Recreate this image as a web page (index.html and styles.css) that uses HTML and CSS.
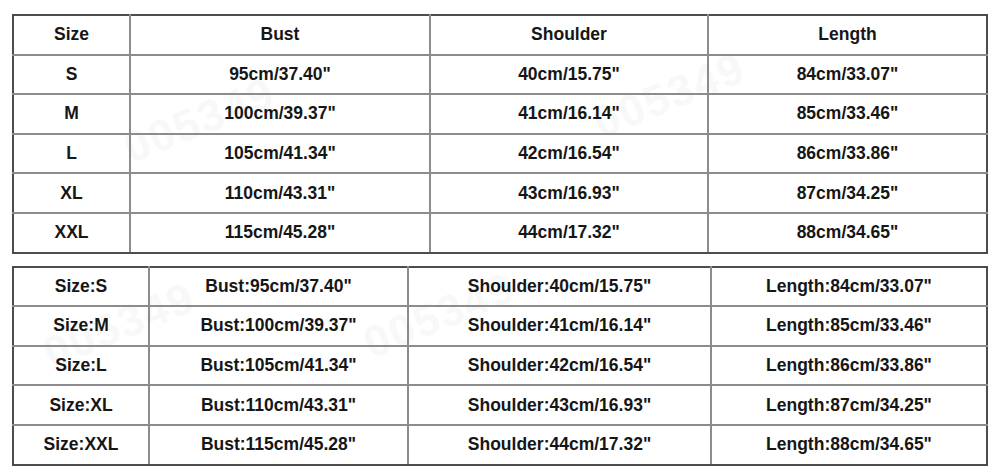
FILE: index.html
```html
<!DOCTYPE html>
<html>
<head>
<meta charset="utf-8">
<link rel="stylesheet" href="styles.css">
</head>
<body>
<div class="page">
  <div class="wm wm1">005349</div>
  <div class="wm wm2">005349</div>
  <div class="wm wm3">005349</div>
  <div class="wm wm4">005349</div>
  <table class="chart chart-top">
    <colgroup>
      <col class="c1"><col class="c2"><col class="c3"><col class="c4">
    </colgroup>
    <tr><td>Size</td><td>Bust</td><td>Shoulder</td><td>Length</td></tr>
    <tr><td>S</td><td>95cm/37.40"</td><td>40cm/15.75"</td><td>84cm/33.07"</td></tr>
    <tr><td>M</td><td>100cm/39.37"</td><td>41cm/16.14"</td><td>85cm/33.46"</td></tr>
    <tr><td>L</td><td>105cm/41.34"</td><td>42cm/16.54"</td><td>86cm/33.86"</td></tr>
    <tr><td>XL</td><td>110cm/43.31"</td><td>43cm/16.93"</td><td>87cm/34.25"</td></tr>
    <tr><td>XXL</td><td>115cm/45.28"</td><td>44cm/17.32"</td><td>88cm/34.65"</td></tr>
  </table>
  <table class="chart chart-bottom">
    <colgroup>
      <col class="d1"><col class="d2"><col class="d3"><col class="d4">
    </colgroup>
    <tr><td>Size:S</td><td>Bust:95cm/37.40"</td><td>Shoulder:40cm/15.75"</td><td>Length:84cm/33.07"</td></tr>
    <tr><td>Size:M</td><td>Bust:100cm/39.37"</td><td>Shoulder:41cm/16.14"</td><td>Length:85cm/33.46"</td></tr>
    <tr><td>Size:L</td><td>Bust:105cm/41.34"</td><td>Shoulder:42cm/16.54"</td><td>Length:86cm/33.86"</td></tr>
    <tr><td>Size:XL</td><td>Bust:110cm/43.31"</td><td>Shoulder:43cm/16.93"</td><td>Length:87cm/34.25"</td></tr>
    <tr><td>Size:XXL</td><td>Bust:115cm/45.28"</td><td>Shoulder:44cm/17.32"</td><td>Length:88cm/34.65"</td></tr>
  </table>
</div>
</body>
</html>
```
FILE: styles.css
```css
html, body {
  margin: 0;
  padding: 0;
  background: #ffffff;
}
.page {
  position: relative;
  width: 1000px;
  height: 473px;
  padding: 14px 0 0 12px;
  box-sizing: border-box;
  overflow: hidden;
  font-family: "Liberation Sans", Arial, sans-serif;
}
.wm {
  position: absolute;
  font-family: "Liberation Sans", Arial, sans-serif;
  font-weight: bold;
  font-size: 44px;
  color: #f8f8f8;
  transform: rotate(-22deg);
  z-index: 0;
  letter-spacing: 2px;
}
.wm1 { left: 120px; top: 95px; }
.wm2 { left: 590px; top: 70px; }
.wm3 { left: 360px; top: 290px; }
.wm4 { left: 40px; top: 300px; }
.chart {
  position: relative;
  z-index: 1;
  border-collapse: collapse;
  table-layout: fixed;
  width: 974px;
  border: 2px solid #4d4d4d;
}
.chart td {
  border: 2px solid #8c8c8c;
  height: 37.6px;
  padding: 0;
  text-align: center;
  vertical-align: middle;
  font-weight: bold;
  font-size: 17.5px;
  color: #161616;
}
.chart tr:first-child td { border-top-color: #4d4d4d; }
.chart tr:last-child td { border-bottom-color: #4d4d4d; }
.chart td:first-child { border-left-color: #4d4d4d; }
.chart td:last-child { border-right-color: #4d4d4d; }
.chart-top { margin-bottom: 12px; }
.c1 { width: 117px; }
.c2 { width: 300px; }
.c3 { width: 278px; }
.c4 { width: 279px; }
.d1 { width: 136px; }
.d2 { width: 259px; }
.d3 { width: 303px; }
.d4 { width: 276px; }
```
